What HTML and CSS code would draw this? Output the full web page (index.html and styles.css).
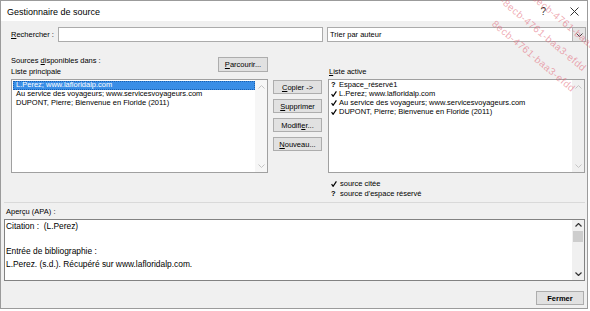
FILE: index.html
```html
<!DOCTYPE html>
<html lang="fr">
<head>
<meta charset="utf-8">
<title>Gestionnaire de source</title>
<link rel="stylesheet" href="styles.css">
</head>
<body>
<div class="dialog">
  <div class="titlebar">
    <span class="title">Gestionnaire de source</span>
    <span class="help">?</span>
    <svg class="close" width="9" height="9" viewBox="0 0 9 9"><path d="M0.5 0.5 L8.5 8.5 M8.5 0.5 L0.5 8.5" stroke="#333" stroke-width="1" fill="none"/></svg>
  </div>
  <div class="body">
    <div class="top">
      <div class="search-row">
        <span class="search-label"><u>R</u>echercher :</span>
        <div class="input"></div>
        <div class="select">
          <span class="select-text">Trier par auteur</span>
          <span class="select-btn"><svg width="7" height="4" viewBox="0 0 7 4"><path d="M0.5 0.5 L3.5 3.5 L6.5 0.5" stroke="#444" stroke-width="1" fill="none"/></svg></span>
        </div>
      </div>
      <div class="main">
        <div class="left-head">
          <div class="head-text">
            <div>Sources <u>d</u>isponibles dans :</div>
            <div>Liste principale</div>
          </div>
          <div class="btn btn-browse"><u>P</u>arcourir...</div>
        </div>
        <div class="right-head"><u>L</u>iste active</div>
        <div class="list list-left">
          <div class="items">
            <div class="item selected">L.Perez; www.lafloridalp.com</div>
            <div class="item">Au service des voyageurs; www.servicesvoyageurs.com</div>
            <div class="item">DUPONT, Pierre; Bienvenue en Floride (2011)</div>
          </div>
          <div class="vscroll light">
            <svg width="7" height="4" viewBox="0 0 7 4"><path d="M0.5 3.5 L3.5 0.5 L6.5 3.5" stroke="#c4c4c4" stroke-width="1" fill="none"/></svg>
            <svg width="7" height="4" viewBox="0 0 7 4"><path d="M0.5 0.5 L3.5 3.5 L6.5 0.5" stroke="#c4c4c4" stroke-width="1" fill="none"/></svg>
          </div>
        </div>
        <div class="buttons">
          <div class="btn"><u>C</u>opier -&gt;</div>
          <div class="btn"><u>S</u>upprimer</div>
          <div class="btn">Modifi<u>e</u>r...</div>
          <div class="btn"><u>N</u>ouveau...</div>
        </div>
        <div class="list list-right">
          <div class="items">
            <div class="aitem"><span class="mark">?</span>Espace_réservé1</div>
            <div class="aitem"><span class="mark"><svg width="6" height="6" viewBox="0 0 6 6"><path d="M0.6 3.2 L2.1 5.3 L5.4 0.4" stroke="#000" stroke-width="1.2" fill="none"/></svg></span>L.Perez; www.lafloridalp.com</div>
            <div class="aitem"><span class="mark"><svg width="6" height="6" viewBox="0 0 6 6"><path d="M0.6 3.2 L2.1 5.3 L5.4 0.4" stroke="#000" stroke-width="1.2" fill="none"/></svg></span>Au service des voyageurs; www.servicesvoyageurs.com</div>
            <div class="aitem"><span class="mark"><svg width="6" height="6" viewBox="0 0 6 6"><path d="M0.6 3.2 L2.1 5.3 L5.4 0.4" stroke="#000" stroke-width="1.2" fill="none"/></svg></span>DUPONT, Pierre; Bienvenue en Floride (2011)</div>
          </div>
          <div class="vscroll">
            <svg width="7" height="4" viewBox="0 0 7 4"><path d="M0.5 3.5 L3.5 0.5 L6.5 3.5" stroke="#c4c4c4" stroke-width="1" fill="none"/></svg>
            <svg width="7" height="4" viewBox="0 0 7 4"><path d="M0.5 0.5 L3.5 3.5 L6.5 0.5" stroke="#c4c4c4" stroke-width="1" fill="none"/></svg>
          </div>
        </div>
        <div class="legend">
          <div class="legend-row"><span class="lmark"><svg width="6" height="6" viewBox="0 0 6 6"><path d="M0.6 3.2 L2.1 5.3 L5.4 0.4" stroke="#000" stroke-width="1.2" fill="none"/></svg></span>source citée</div>
          <div class="legend-row"><span class="lmark">?</span>source d'espace réservé</div>
        </div>
      </div>
    </div>
    <div class="sep"></div>
    <div class="preview-label">Aperçu (APA) :</div>
    <div class="preview">
      <div class="preview-text">
        <div>Citation :&nbsp; (L.Perez)</div>
        <div>&nbsp;</div>
        <div>Entrée de bibliographie :</div>
        <div>L.Perez. (s.d.). Récupéré sur www.lafloridalp.com.</div>
      </div>
      <div class="pscroll">
        <svg width="7" height="4" viewBox="0 0 7 4"><path d="M0.5 3.5 L3.5 0.5 L6.5 3.5" stroke="#333" stroke-width="1.2" fill="none"/></svg>
        <div class="thumb"></div>
        <div class="spacer"></div>
        <svg width="7" height="4" viewBox="0 0 7 4"><path d="M0.5 0.5 L3.5 3.5 L6.5 0.5" stroke="#333" stroke-width="1.2" fill="none"/></svg>
      </div>
    </div>
    <div class="footer">
      <div class="btn btn-close">Fermer</div>
    </div>
  </div>
</div>
<div class="watermark">
  <span class="wm wm1">8ecb-4761-baa3-efdd</span>
  <span class="wm wm2">-8ecb-4761-baa3-efdd</span>
  <span class="wm wm3">8ecb-4761-baa3-efdd</span>
</div>
</body>
</html>
```
FILE: styles.css
```css
* { box-sizing: border-box; }
html, body { margin: 0; padding: 0; background: #fff; }
body {
  font-family: "Liberation Sans", Arial, sans-serif;
  font-size: 7.5px;
  color: #000;
  width: 590px;
  height: 311px;
  overflow: hidden;
  position: relative;
}
u { text-decoration: underline; text-underline-offset: 1px; }

.dialog {
  width: 588px;
  height: 309px;
  border: 1px solid #9b9b9b;
  background: #f0f0f0;
  display: flex;
  flex-direction: column;
}
.titlebar {
  height: 20px;
  flex: none;
  background: #fff;
  display: flex;
  align-items: center;
  padding-left: 6px;
}
.title { font-size: 9px; flex: 1; padding-top: 1px; }
.help { font-size: 10px; color: #333; margin-right: 24px; }
.close { margin-right: 8px; }

.body {
  flex: 1;
  display: flex;
  flex-direction: column;
  padding: 6px 2px 3px 3px;
}
.top { padding-left: 7px; margin-right: -1px; }

.search-row { display: flex; height: 15px; align-items: stretch; }
.search-label { width: 47px; display: flex; align-items: center; }
.input { width: 265px; background: #fff; border: 1px solid #ababab; }
.select {
  width: 259px;
  margin-left: 4px;
  background: #fff;
  border: 1px solid #ababab;
  display: flex;
  align-items: center;
  padding-left: 2px;
}
.select-text { flex: 1; }
.select-btn {
  width: 13px;
  height: 13px;
  background: #e6e6e6;
  border-left: 1px solid #b5b5b5;
  display: flex;
  align-items: center;
  justify-content: center;
}

.main {
  margin-top: 13px;
  display: grid;
  grid-template-columns: 257px 49px 258px;
  column-gap: 5px;
  grid-template-rows: 24px 94px auto;
}
.left-head { grid-column: 1; grid-row: 1; display: flex; justify-content: space-between; }
.head-text { line-height: 11px; }
.btn {
  height: 14px;
  background: #e1e1e1;
  border: 1px solid #adadad;
  display: flex;
  align-items: center;
  justify-content: center;
}
.btn-browse { width: 50px; height: 15px; margin-top: 2px; }
.right-head { grid-column: 3; grid-row: 1; margin-top: 11px; padding-left: 1px; line-height: 11px; margin-left: 1px; }

.list {
  background: #fff;
  border: 1px solid #a0a0a0;
  display: flex;
}
.list-left { grid-column: 1; grid-row: 2; }
.list-right { grid-column: 3; grid-row: 2; margin-left: 1px; }
.items { flex: 1; }
.list-left .items { padding: 1px 0 0 1px; }
.item { line-height: 8.8px; padding-left: 3px; white-space: nowrap; }
.item.selected { background: #3a8ee6; color: #fff; outline: 1px dotted #1a5fb0; outline-offset: -1px; }
.list-right .items { padding: 0 0 0 2px; }
.aitem { line-height: 9.1px; display: flex; align-items: center; white-space: nowrap; }
.mark { width: 8px; display: inline-flex; align-items: center; font-weight: bold; }

.vscroll {
  width: 12px;
  background: #f0f0f0;
  display: flex;
  flex-direction: column;
  justify-content: space-between;
  align-items: center;
  padding: 5px 0 4px;
}
.vscroll.light { background: #f6f6f6; }

.buttons { grid-column: 2; grid-row: 2; display: flex; flex-direction: column; gap: 5px; padding-top: 1px; }

.legend { grid-column: 3; grid-row: 3; margin-top: 6px; padding-left: 4px; }
.legend-row { line-height: 10px; display: flex; align-items: center; }
.lmark { width: 6px; margin-right: 3px; display: inline-flex; align-items: center; font-weight: bold; }

.sep { height: 1px; background: #d9d9d9; margin-top: 3px; }
.preview-label { margin-top: 4px; line-height: 10px; padding-left: 2px; }
.preview {
  margin-top: 2px;
  height: 62px;
  background: #fff;
  border: 1px solid #828282;
  display: flex;
}
.preview-text { flex: 1; font-size: 8.4px; line-height: 12.5px; padding: 0 0 0 1px; }
.pscroll {
  width: 12px;
  background: #f0f0f0;
  display: flex;
  flex-direction: column;
  align-items: center;
  padding: 3px 0 4px;
}
.thumb { width: 10px; height: 11px; background: #cdcdcd; margin-top: 4px; }
.spacer { flex: 1; }

.footer { margin-top: 10px; display: flex; justify-content: flex-end; padding-right: 1px; }
.btn-close { width: 48px; font-weight: bold; }

.watermark {
  position: absolute;
  top: 0;
  right: 0;
  width: 115px;
  height: 110px;
  overflow: hidden;
  pointer-events: none;
}
.wm {
  position: absolute;
  font-size: 10px;
  color: rgba(225, 95, 115, 0.55);
  letter-spacing: 0.5px;
  white-space: nowrap;
  transform: rotate(40deg);
  transform-origin: left top;
}
.wm1 { left: 62px; top: -8px; }
.wm2 { left: 30px; top: -5px; }
.wm3 { left: 22px; top: 18px; }
```
